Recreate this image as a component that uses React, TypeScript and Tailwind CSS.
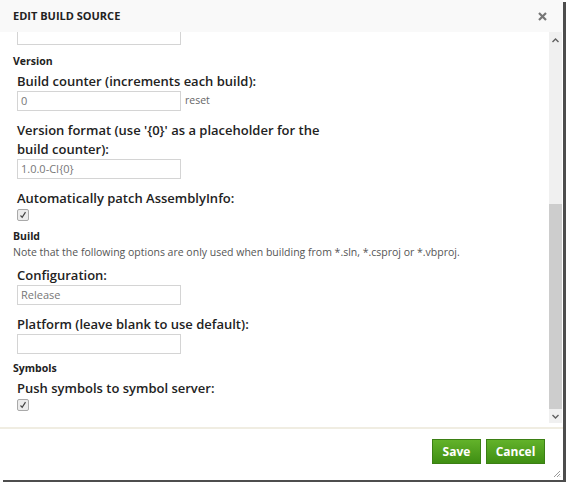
const FONT = { fontFamily: '"Open Sans", "Noto Sans", sans-serif' }

function Field({ label, value, extra }: { label: React.ReactNode; value?: string; extra?: string }) {
  return (
    <div className="pl-1 mt-[10px]">
      <div className="text-[13px] leading-[19px] font-semibold text-[#222]">{label}</div>
      <div className="flex items-center">
        <div className="w-[164px] h-[20px] border border-[#d4d4d4] px-[3px] text-[11px] leading-[18px] text-[#777] bg-white">{value}</div>
        {extra && <span className="ml-[4px] text-[10.5px] text-[#666]">{extra}</span>}
      </div>
    </div>
  )
}

function Check({ label }: { label: string }) {
  return (
    <div className="pl-1 mt-[10px]">
      <div className="text-[13px] leading-[19px] font-semibold text-[#222]">{label}</div>
      <div className="mt-[1px] w-[12px] h-[12px] rounded-[2px] border border-[#a9a9a9] bg-[#ececec] flex items-center justify-center">
        <svg width="8" height="8" viewBox="0 0 8 8"><path d="M1.5 4.5 L3.2 6.3 L6.5 1.2" fill="none" stroke="#444" strokeWidth="1.2" /></svg>
      </div>
    </div>
  )
}

export default function App() {
  return (
    <div className="w-[569px] h-[484px] bg-white overflow-hidden" style={FONT}>
      <div className="w-[563px] h-[480px] bg-white flex flex-col shadow-[3px_2px_0_#4d4d4d]">
        {/* Header */}
        <div className="h-[32px] bg-[#f9f9f9] flex items-center justify-between pl-[13px] pr-[16px]">
          <span className="text-[11px] font-bold text-[#222]">EDIT BUILD SOURCE</span>
          <svg width="9" height="9" viewBox="0 0 9 9"><path d="M1 1 L8 8 M8 1 L1 8" stroke="#777" strokeWidth="2.2" /></svg>
        </div>

        {/* Body */}
        <div className="flex h-[391px]">
          <div className="flex-1 overflow-hidden pl-[13px]">
            <div className="ml-1 w-[164px] h-[13px] border-x border-b border-[#d4d4d4]" />
            <div className="mt-[8px] text-[10.5px] leading-[16px] font-bold text-[#222]">Version</div>
            <div className="-mt-[7px]">
              <Field label="Build counter (increments each build):" value="0" extra="reset" />
            </div>
            <Field label={<>Version format (use '{'{0}'}' as a placeholder for the<br />build counter):</>} value="1.0.0-CI{0}" />
            <Check label="Automatically patch AssemblyInfo:" />
            <div className="mt-[7px] text-[10.5px] leading-[16px] font-bold text-[#222]">Build</div>
            <div className="text-[10.5px] leading-[16px] text-[#555]">Note that the following options are only used when building from *.sln, *.csproj or *.vbproj.</div>
            <div className="-mt-[4px]">
              <Field label="Configuration:" value="Release" />
            </div>
            <Field label="Platform (leave blank to use default):" value="" />
            <div className="mt-[6px] text-[10.5px] leading-[16px] font-bold text-[#222]">Symbols</div>
            <div className="-mt-[7px]">
              <Check label="Push symbols to symbol server:" />
            </div>
          </div>
          {/* Scrollbar */}
          <div className="w-[13px] bg-[#f0f0f0] flex flex-col mr-[1px]">
            <div className="h-[17px] flex items-center justify-center">
              <svg width="7" height="5" viewBox="0 0 7 5"><path d="M0.5 4 L3.5 1 L6.5 4" fill="none" stroke="#606060" strokeWidth="1.4" /></svg>
            </div>
            <div className="h-[155px]" />
            <div className="h-[205px] bg-[#cdcdcd]" />
            <div className="flex-1 flex items-center justify-center">
              <svg width="7" height="5" viewBox="0 0 7 5"><path d="M0.5 1 L3.5 4 L6.5 1" fill="none" stroke="#606060" strokeWidth="1.4" /></svg>
            </div>
          </div>
        </div>

        {/* Footer */}
        <div className="mt-[4px] h-[2px] bg-[#f0ede2]" />
        <div className="flex-1 relative flex justify-end items-start pt-[10px] pr-[18px] gap-[5px]">
          <button className="w-[49px] h-[25px] border border-[#3b7f14] bg-gradient-to-b from-[#62b22a] to-[#3f8f12] text-white text-[12px] font-bold">Save</button>
          <button className="w-[59px] h-[25px] border border-[#3b7f14] bg-gradient-to-b from-[#62b22a] to-[#3f8f12] text-white text-[12px] font-bold">Cancel</button>
          <svg className="absolute right-[2px] bottom-[2px]" width="8" height="8" viewBox="0 0 8 8">
            <path d="M7 1 L1 7 M7 4 L4 7 M7 6.5 L6.5 7" stroke="#9a9a9a" strokeWidth="1" />
          </svg>
        </div>
      </div>
    </div>
  )
}
